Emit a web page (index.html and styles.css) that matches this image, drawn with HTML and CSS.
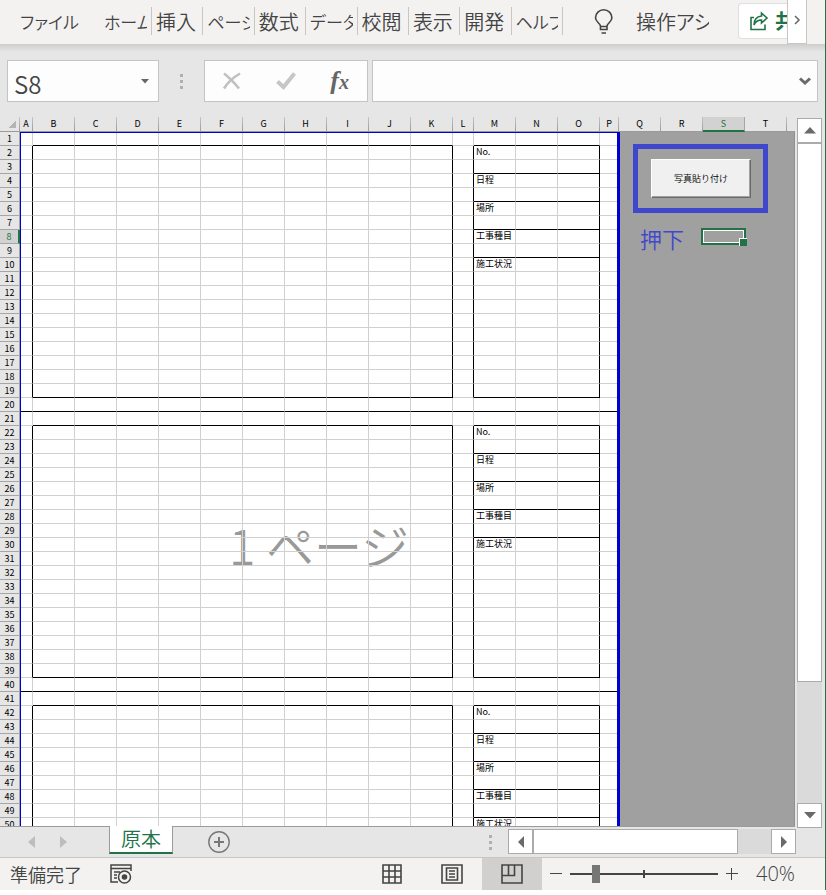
FILE: index.html
```html
<!DOCTYPE html>
<html lang="ja">
<head>
<meta charset="utf-8">
<title>原本</title>
<link rel="stylesheet" href="styles.css">
</head>
<body>
<div class="app">
  <header class="ribbon">
    <button class="file-tab kana">ファイル</button>
    <nav class="tabs">
      <button class="kana"><span>ホーム</span></button>
      <button><span>挿入</span></button>
      <button class="kana"><span>ページ</span></button>
      <button><span>数式</span></button>
      <button class="kana"><span>データ</span></button>
      <button><span>校閲</span></button>
      <button><span>表示</span></button>
      <button><span>開発</span></button>
      <button class="kana"><span>ヘルプ</span></button>
    </nav>
    <button class="assist">
      <svg width="20" height="26" viewBox="0 0 20 26" fill="none" stroke="#444" stroke-width="1.6"><path d="M6.500 20.500v-3.500C6 14 1.500 13 1.500 8.800a8.200 8 0 0 1 16.400 0c0 4.200-4.400 5.200-4.900 8.200v3.500zM6.500 17.500h6.500M7.500 24h4.500"/></svg>
      <span>操作アシスト</span>
    </button>
    <button class="share">
      <svg width="20" height="20" viewBox="0 0 20 20" fill="none" stroke="#217346" stroke-width="1.6"><path d="M5 6.500H2v12h14v-5M12.500 2l5.500 5-5.500 5V9C8.500 9 6.500 10.500 5 14c0-5.500 3-8.500 7.500-9z"/></svg>
      <span>共有</span>
    </button>
    <button class="more" aria-label="次へ"><svg width="8" height="10" viewBox="0 0 8 10" fill="none" stroke="#666" stroke-width="1.5"><path d="M2 1l4 4-4 4"/></svg></button>
  </header>

  <section class="formula-bar">
    <div class="name-box">
      <input type="text" value="S8" aria-label="名前ボックス">
      <svg width="8" height="5" viewBox="0 0 8 5"><path d="M0 0h8L4 4.500z" fill="#666"/></svg>
    </div>
    <div class="grip"><i></i><i></i><i></i></div>
    <div class="formula-actions">
      <button aria-label="キャンセル"><svg width="20" height="18" viewBox="0 0 20 18" fill="none" stroke="#c0c0c0" stroke-width="2.600"><path d="M2 1.500c4 3 10 9 15 15M18 1.500C12 5 6 10 2 16.500"/></svg></button>
      <button aria-label="入力"><svg width="20" height="18" viewBox="0 0 20 18" fill="none" stroke="#c6c6c6" stroke-width="4"><path d="M1.500 9.500l6 5.500L18.500 1.500"/></svg></button>
      <button class="fx" aria-label="関数の挿入"><i>f<small>x</small></i></button>
    </div>
    <div class="formula-input">
      <input type="text" aria-label="数式バー">
      <svg width="12" height="9" viewBox="0 0 12 9" fill="none" stroke="#6a6a6a" stroke-width="3"><path d="M1 1.500l5 4.500 5-4.500"/></svg>
    </div>
  </section>

  <main class="workspace">
    <div class="sheet">
      <div class="watermark">1 ページ</div>
      <table class="grid" id="grid"></table>
      <div class="page-frame"></div>
      <div class="callout"><button>写真貼り付け</button></div>
      <div class="note">押下</div>
      <div class="selection"></div>
    </div>
    <div class="vscroll">
      <button aria-label="上へ"><svg width="12" height="7" viewBox="0 0 12 7"><path d="M6 0l6 6.500H0z" fill="#6a6a6a"/></svg></button>
      <div class="thumb"></div>
      <button class="end" aria-label="下へ"><svg width="12" height="7" viewBox="0 0 12 7"><path d="M0 0h12L6 6.500z" fill="#6a6a6a"/></svg></button>
    </div>
  </main>

  <section class="sheet-bar">
    <div class="sheet-nav">
      <button aria-label="前のシート"><svg width="7" height="12" viewBox="0 0 7 12"><path d="M7 0v12L0 6z" fill="#bdbdbd"/></svg></button>
      <button aria-label="次のシート"><svg width="7" height="12" viewBox="0 0 7 12"><path d="M0 0v12l7-6z" fill="#bdbdbd"/></svg></button>
    </div>
    <button class="sheet-tab">原本</button>
    <button class="add-sheet" aria-label="新しいシート"><svg width="22" height="22" viewBox="0 0 22 22" fill="none" stroke="#777"><circle cx="11" cy="11" r="10.200" stroke-width="1.400"/><path d="M11 6v10M6 11h10" stroke-width="2"/></svg></button>
    <div class="grip small"><i></i><i></i><i></i></div>
    <div class="hscroll">
      <button aria-label="左へ"><svg width="6" height="12" viewBox="0 0 6 12"><path d="M6 0v12L0 6z" fill="#6a6a6a"/></svg></button>
      <div class="thumb"></div>
      <button class="end" aria-label="右へ"><svg width="6" height="12" viewBox="0 0 6 12"><path d="M0 0v12l6-6z" fill="#6a6a6a"/></svg></button>
    </div>
  </section>

  <footer class="status">
    <span class="ready">準備完了</span>
    <button class="macro" aria-label="マクロの記録"><svg width="22" height="20" viewBox="0 0 22 20" fill="none" stroke="#444" stroke-width="1.500"><path d="M8 18H1V1h20v6M1 4.500h20M4 8h6M4 11h3M4 14h3"/><circle cx="14.500" cy="13" r="6"/><circle cx="14.500" cy="13" r="2.800" fill="#444" stroke="none"/></svg></button>
    <div class="views">
      <button aria-label="標準"><svg width="20" height="20" viewBox="0 0 20 20" fill="none" stroke="#444" stroke-width="1.600"><path d="M1 1h18v18H1zM7 1v18M13 1v18M1 7h18M1 13h18"/></svg></button>
      <button aria-label="ページ レイアウト"><svg width="22" height="20" viewBox="0 0 22 20" fill="none" stroke="#444" stroke-width="1.600"><path d="M1 1h20v18H1zM5.500 4h11v12h-11zM8 7h6M8 10h6M8 13h6"/></svg></button>
      <button class="on" aria-label="改ページ プレビュー"><svg width="22" height="20" viewBox="0 0 22 20" fill="none" stroke="#444" stroke-width="1.600"><path d="M1 1h20v18H1zM1 11.500h12.500V1M7.500 1v10.500"/></svg></button>
    </div>
    <div class="zoom">
      <button aria-label="縮小"><svg width="12" height="12" viewBox="0 0 12 12"><path d="M0 5h12v1H0z" fill="#444"/></svg></button>
      <input type="range" min="0" max="100" value="16" aria-label="ズーム">
      <button aria-label="拡大"><svg width="12" height="12" viewBox="0 0 12 12"><path d="M0 5h12v1H0zM5 0h1v12H5z" fill="#444"/></svg></button>
      <span>40%</span>
    </div>
  </footer>
</div>
<script src="grid.js"></script>
</body>
</html>
```
FILE: styles.css
```css
* { box-sizing: border-box; }

body {
  margin: 0;
  background: #fff;
  font-family: "Noto Sans CJK JP", sans-serif;
  font-weight: 350;
  color: #444;
}

button, input {
  margin: 0;
  padding: 0;
  border: 0;
  border-radius: 0;
  background: none;
  font: inherit;
  color: inherit;
}

button svg, .name-box svg, .formula-input svg { display: block; }

.app {
  display: flex;
  flex-direction: column;
  height: calc(100vh - 5px);
  border-right: 1px solid #217346;
  background: #e6e6e6;
}

/* Ribbon */
.ribbon {
  display: flex;
  flex: none;
  height: 44px;
  background: #f3f2f1;
  font-size: 20px;
  line-height: 30px;
  font-feature-settings: "palt";
  white-space: nowrap;
  overflow: hidden;
}

.ribbon .kana { font-size: 17px; }

.file-tab {
  flex: none;
  width: 100px;
  padding: 0 0 1px 20px;
  text-align: left;
}

.tabs {
  display: grid;
  grid-template-columns: 52px repeat(8, 1fr);
  flex: 0 0 463px;
  padding: 7px 0 9px;
}

.tabs button {
  min-width: 0;
  padding: 0 4px 2px;
  border-right: 1px solid #c8c6c4;
  overflow: hidden;
}

.tabs span {
  display: block;
  overflow: hidden;
  text-align: left;
}

.assist {
  display: flex;
  align-items: center;
  gap: 22px;
  flex: 0 0 115px;
  min-width: 0;
  margin-left: 31px;
}

.assist svg { flex: none; }
.assist span { overflow: hidden; }

.share {
  display: flex;
  align-items: center;
  gap: 6px;
  flex: 0 0 50px;
  min-width: 0;
  height: 36px;
  margin: 3px 0 0 29px;
  padding-left: 10px;
  border: 1px solid #e1dfdd;
  border-right: 0;
  border-radius: 4px 0 0 4px;
  background: #fff;
  color: #217346;
  font-weight: 700;
  overflow: hidden;
}

.share svg { flex: none; }

.more {
  display: grid;
  place-items: center;
  flex: 0 0 20px;
  height: 44px;
  margin-left: -1px;
  padding-bottom: 3px;
  border: 1px solid #c8c6c4;
  border-top: 0;
  background: #fff;
}

/* Formula bar */
.formula-bar {
  display: flex;
  flex: none;
  padding: 16px 7px 15px;
  background: linear-gradient(#cdcdcd, #e6e6e6 8px);
}

.name-box, .formula-actions, .formula-input {
  display: flex;
  align-items: center;
  min-width: 0;
  height: 42px;
  border: 1px solid #c4c4c4;
  background: #fdfdfd;
}

.name-box {
  flex: 0 0 152px;
  padding: 0 9px 0 6px;
}

.name-box input {
  flex: 1;
  min-width: 0;
  height: 40px;
  padding-top: 4px;
  font-size: 24px;
}

.grip {
  display: flex;
  flex-direction: column;
  align-items: center;
  justify-content: center;
  gap: 3px;
  flex: 0 0 45px;
}

.grip i {
  width: 3px;
  height: 3px;
  background: #b0b0b0;
}

.formula-actions {
  justify-content: space-between;
  flex: 0 0 164px;
  padding: 0 18px 0 17px;
}

.fx {
  font: 700 26px/30px "Liberation Serif", serif;
  color: #666;
}

.fx small { font-size: 20px; }

.formula-input {
  flex: 1;
  margin-left: 4px;
  padding-right: 6px;
}

.formula-input input {
  flex: 1;
  min-width: 0;
  height: 40px;
  padding: 0 8px;
  font-size: 20px;
}

/* Worksheet */
.workspace {
  display: flex;
  flex: 1;
  min-height: 0;
}

.sheet {
  position: relative;
  flex: 1;
  overflow: hidden;
  border-bottom: 1px solid #9b9b9b;
  background: #fff;
}

.grid {
  position: relative;
  width: 100%;
  table-layout: fixed;
  border-collapse: separate;
  border-spacing: 0;
  font-size: 9px;
  font-weight: 400;
  line-height: 12px;
  color: #000;
}

.c-head { width: 20px; }
.c-a { width: 13px; }
.c-std { width: 42px; }
.c-l { width: 21px; }
.c-p { width: 19px; }

.grid th, .grid td {
  height: 14px;
  padding: 0;
  border: 0 solid #d0d0d0;
  border-width: 0 1px 1px 0;
  white-space: nowrap;
}

.grid th {
  border-color: #a6a6a6;
  background: #e6e6e6;
  font-weight: 400;
  text-align: center;
}

.grid thead th {
  height: 15px;
  border-image: linear-gradient(#c8c8c8, #999) 1;
}

.grid thead th:last-child { border-right: 0; }

.grid thead .corner {
  background: linear-gradient(135deg, #e6e6e6 50%, #b4b4b4 50%) right 3px bottom 3px / 8px 8px no-repeat #e6e6e6;
}

.grid thead .active, .grid tbody .active {
  background: #d2d2d2;
  color: #217346;
}

.grid thead .active {
  border-image: none;
  border-bottom: 2px solid #217346;
}

.grid tbody .active { border-right: 2px solid #217346; }

.grid td {
  padding-left: 2px;
  line-height: 11px;
  vertical-align: top;
}

.grid .off { border: 0; background: #a0a0a0; }
.grid .off:last-child { border-right: 1px solid #919191; }
.grid .kb { border-bottom-color: #000; }
.grid .kr { border-right-color: #000; }

.grid td span {
  display: block;
  width: 0;
}

.watermark {
  position: absolute;
  left: 229px;
  top: 393px;
  font-size: 48px;
  line-height: 68px;
  color: #999;
}

.page-frame {
  position: absolute;
  inset: 15px auto 0 20px;
  width: 600px;
  border: solid #0000d0;
  border-width: 1px 3px 0 1px;
}

.callout {
  position: absolute;
  left: 633px;
  top: 27px;
  padding: 10px 12px 10px 13px;
  border: 5px solid #3f48cc;
}

.callout button {
  display: block;
  width: 100px;
  height: 39px;
  border: 1px solid #fff;
  border-right-color: #696969;
  border-bottom-color: #696969;
  background: #f0f0f0;
  box-shadow: inset -1px -1px #a0a0a0;
  font-size: 9px;
  color: #000;
}

.note {
  position: absolute;
  left: 640px;
  top: 105px;
  font-size: 22px;
  line-height: 32px;
  color: #3f48cc;
}

.selection {
  position: absolute;
  left: 701px;
  top: 111px;
  width: 45px;
  height: 17px;
  border: 2px solid #217346;
  box-shadow: inset 0 0 0 1px #fff;
}

.selection::after {
  content: "";
  position: absolute;
  right: -3px;
  bottom: -3px;
  width: 7px;
  height: 7px;
  border: solid #fff;
  border-width: 1px 0 0 1px;
  background: #217346;
}

/* Scroll bars */
.vscroll, .hscroll {
  display: flex;
  background: #dadada;
}

.vscroll {
  flex-direction: column;
  flex: 0 0 25px;
  margin: 1px 3px -1px 2px;
}

.hscroll {
  flex: 0 0 288px;
  height: 25px;
  margin: 2px 29px 0 0;
}

.vscroll button, .hscroll button {
  display: grid;
  place-items: center;
  flex: 0 0 25px;
  border: 1px solid #ababab;
  background: #fff;
}

.vscroll .thumb {
  flex: 0 1 539px;
  border: 1px solid #ababab;
  background: #fff;
}

.hscroll .thumb {
  flex: 0 1 205px;
  border: 1px solid #ababab;
  background: #fff;
}

.vscroll .end { margin-top: auto; }
.hscroll .end { margin-left: auto; }

/* Sheet tabs */
.sheet-bar {
  display: flex;
  flex: none;
  height: 31px;
  border-bottom: 1px solid #c6c6c6;
}

.sheet-nav {
  display: flex;
  align-items: center;
  gap: 25px;
  flex: 0 0 109px;
  padding-left: 28px;
}

.sheet-tab {
  flex: 0 0 64px;
  height: 28px;
  margin-top: -1px;
  border: 1px solid #9b9b9b;
  border-width: 0 1px 2px;
  border-bottom-color: #217346;
  background: #fff;
  font-size: 20px;
  line-height: 24px;
  color: #217346;
  position: relative;
}

.add-sheet { margin-left: 35px; }

.grip.small {
  flex: 0 0 35px;
  margin-left: auto;
}

/* Status bar */
.status {
  display: flex;
  align-items: center;
  flex: none;
  height: 32px;
  background: #f3f2f1;
}

.ready {
  flex: 0 0 100px;
  padding-left: 10px;
  font-size: 18px;
  line-height: 28px;
}

.macro { margin-left: 10px; }

.views {
  display: flex;
  height: 32px;
  margin-left: auto;
}

.views button {
  display: grid;
  place-items: center;
  width: 60px;
}

.views .on { background: #d2d0ce; }

.zoom {
  display: flex;
  align-items: center;
  gap: 8px;
  flex: 0 0 283px;
  padding-left: 8px;
}

.zoom input {
  appearance: none;
  width: 148px;
  height: 18px;
  background:
    linear-gradient(#444, #444) center / 2px 8px no-repeat,
    linear-gradient(#444, #444) center / 100% 2px no-repeat;
}

.zoom input::-webkit-slider-thumb {
  appearance: none;
  width: 8px;
  height: 18px;
  background: #777;
}

.zoom span {
  margin-left: 10px;
  font-family: "Open Sans", sans-serif;
  font-size: 20px;
  line-height: 28px;
}
```
FILE: grid.js
```js
const columns = "ABCDEFGHIJKLMNOPQRST".split("");
const narrow = { A: "c-a", L: "c-l", P: "c-p" };
const labels = { 2: "No.", 4: "日程", 6: "場所", 8: "工事種目", 10: "施工状況" };
const rowsPerBlock = 20;
const rowCount = 50;

function cell(col, row) {
  if (col > "P") return '<td class="off"></td>';
  const r = (row - 1) % rowsPerBlock + 1;
  const photo = col >= "B" && col <= "K";
  const info = col >= "M" && col <= "O";
  const classes = [];
  if (r === 20) classes.push("kb");
  if ((photo || info) && (r === 1 || r === 19)) classes.push("kb");
  if (info && [3, 5, 7, 9].includes(r)) classes.push("kb");
  if ("AKLO".includes(col) && r > 1 && r < 20) classes.push("kr");
  const text = col === "M" && labels[r] ? `<span>${labels[r]}</span>` : "";
  return `<td class="${classes.join(" ")}">${text}</td>`;
}

let html = '<colgroup><col class="c-head">';
html += columns.map(c => `<col class="${narrow[c] || "c-std"}">`).join("");
html += '<col></colgroup><thead><tr><th class="corner"></th>';
html += columns.map(c => `<th${c === "S" ? ' class="active"' : ""}>${c}</th>`).join("");
html += "<th></th></tr></thead><tbody>";
for (let row = 1; row <= rowCount; row++) {
  html += `<tr><th${row === 8 ? ' class="active"' : ""}>${row}</th>`;
  html += columns.map(c => cell(c, row)).join("");
  html += '<td class="off"></td></tr>';
}
document.getElementById("grid").innerHTML = html + "</tbody>";
```
